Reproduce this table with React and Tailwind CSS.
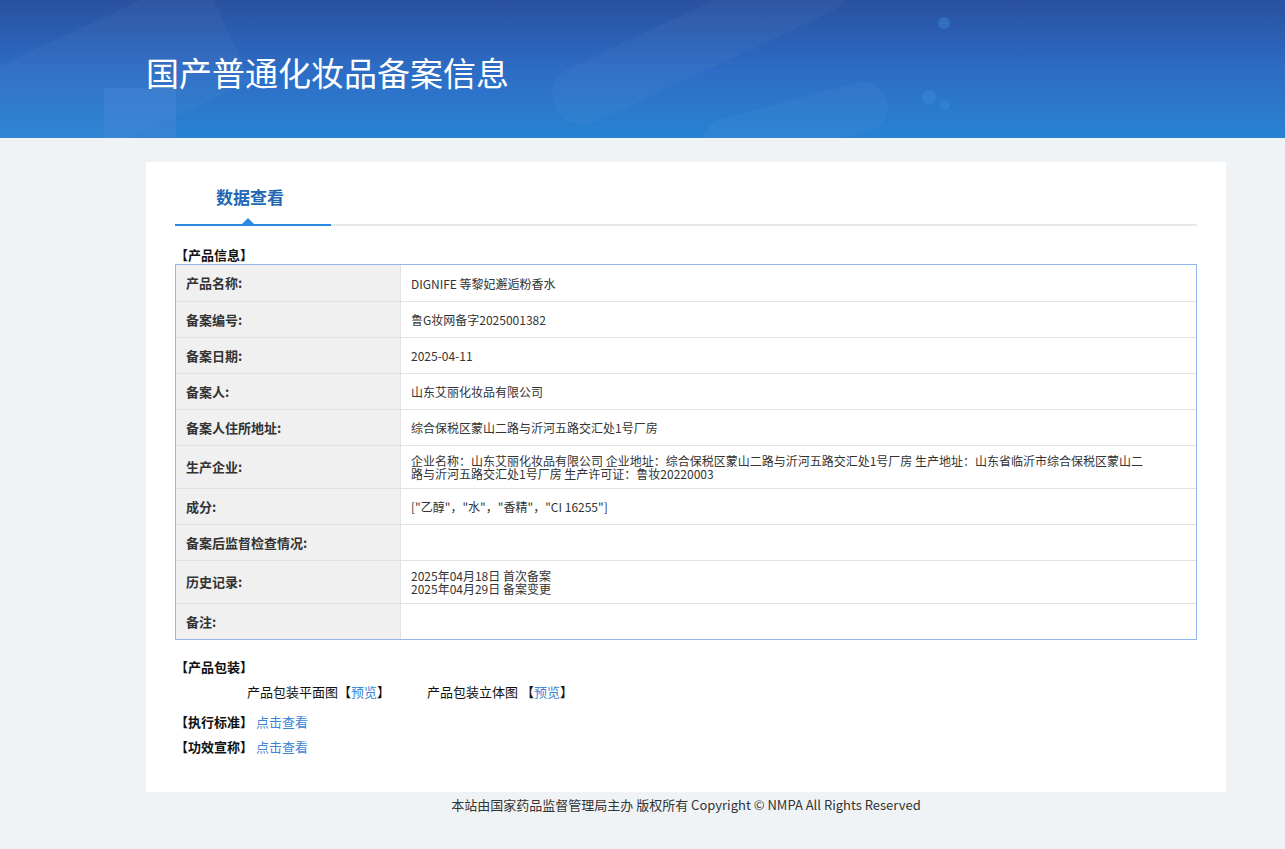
const rows = [
  { label: "产品名称:", value: ["DIGNIFE 等黎妃邂逅粉香水"] },
  { label: "备案编号:", value: ["鲁G妆网备字2025001382"] },
  { label: "备案日期:", value: ["2025-04-11"] },
  { label: "备案人:", value: ["山东艾丽化妆品有限公司"] },
  { label: "备案人住所地址:", value: ["综合保税区蒙山二路与沂河五路交汇处1号厂房"] },
  {
    label: "生产企业:",
    value: [
      "企业名称：山东艾丽化妆品有限公司 企业地址：综合保税区蒙山二路与沂河五路交汇处1号厂房 生产地址：山东省临沂市综合保税区蒙山二路与沂河五路交汇处1号厂房 生产许可证：鲁妆20220003",
    ],
    wrap: true,
  },
  { label: "成分:", value: ['["乙醇"，"水"，"香精"，"CI 16255"]'] },
  { label: "备案后监督检查情况:", value: [""] },
  { label: "历史记录:", value: ["2025年04月18日 首次备案", "2025年04月29日 备案变更"] },
  { label: "备注:", value: [""] },
];

const font = { fontFamily: '"Noto Sans CJK SC", "Microsoft YaHei", sans-serif' };

function Header() {
  return (
    <div className="relative h-[138px] overflow-hidden bg-gradient-to-b from-[#2951a0] via-[#2d6cc4] to-[#2882d3]">
      {/* faint background shapes */}
      <div className="absolute left-[-60px] top-[30px] h-[120px] w-[300px] -rotate-[25deg] bg-white/[0.03]" />
      <div className="absolute left-[104px] top-[88px] h-[60px] w-[72px] bg-[#4a86d8]/40" />
      <div className="absolute left-[540px] top-[10px] h-[60px] w-[320px] -rotate-[25deg] rounded-full bg-white/[0.03]" />
      <div className="absolute left-[700px] top-[100px] h-[50px] w-[190px] -rotate-[15deg] rounded-full bg-white/[0.03]" />
      <div className="absolute left-[938px] top-[17px] h-[12px] w-[12px] rounded-full bg-[#3a8ee0]/40" />
      <div className="absolute left-[922px] top-[90px] h-[14px] w-[14px] rounded-full bg-[#3a8ee0]/40" />
      <div className="absolute left-[940px] top-[100px] h-[10px] w-[10px] rounded-full bg-[#3a8ee0]/40" />
      <div className="relative ml-[146px] pt-[49px]">
        <h1 className="text-[33px] font-normal leading-[46px] text-white">国产普通化妆品备案信息</h1>
      </div>
    </div>
  );
}

function InfoTable() {
  return (
    <div className="border border-[#93b6ec]">
      {rows.map((r, i) => (
        <div
          key={r.label}
          className={`flex ${i > 0 ? "border-t border-[#e2e2e2]" : ""} ${r.value.length > 1 || r.wrap ? "min-h-[43px]" : "h-[36px]"}`}
        >
          <div className="flex w-[225px] shrink-0 items-center border-r border-[#e2e2e2] bg-[#f0f0f0] pl-[10px] text-[13px] font-bold text-[#333]">
            {r.label}
          </div>
          <div className="flex flex-1 flex-col justify-center pl-[10px] pr-[48px] text-[12px] leading-[13px] text-[#333]">
            {r.value.map((v, j) => (
              <div key={j}>{v}</div>
            ))}
          </div>
        </div>
      ))}
    </div>
  );
}

export default function App() {
  return (
    <div className="min-h-[849px] bg-[#f0f3f6]" style={font}>
      <Header />
      <div className="ml-[146px] w-[1080px] pt-[24px]">
        <div className="bg-white px-[29px] pb-[36px] pt-[22px]">
          <div className="flex border-b-2 border-[#e8e8e8]">
            <div className="relative -mb-[2px] w-[156px] border-b-2 border-[#2a8ae2] pb-[14px] text-center">
              <span className="relative left-[-3px] text-[17px] font-bold leading-[26px] text-[#2167b5]">数据查看</span>
              <div className="absolute bottom-0 left-[67px] h-0 w-0 border-x-[6px] border-b-[6px] border-x-transparent border-b-[#2a8ae2]" />
            </div>
          </div>

          <div className="mt-[20px] text-[13px] font-bold leading-[18px] text-[#111]">【产品信息】</div>
          <InfoTable />

          <div className="mt-[18px] text-[13px] font-bold leading-[18px] text-[#111]">【产品包装】</div>
          <div className="mt-[7px] flex pl-[72px] text-[13px] leading-[18px] text-[#111]">
            <div className="w-[180px]">
              产品包装平面图【<span className="text-[#3b86d4]">预览</span>】
            </div>
            <div>
              产品包装立体图 【<span className="text-[#3b86d4]">预览</span>】
            </div>
          </div>
          <div className="mt-[12px] flex gap-[3px] text-[13px] leading-[18px]">
            <span className="font-bold text-[#111]">【执行标准】</span>
            <span className="text-[#3b86d4]">点击查看</span>
          </div>
          <div className="mt-[7px] flex gap-[3px] text-[13px] leading-[18px]">
            <span className="font-bold text-[#111]">【功效宣称】</span>
            <span className="text-[#3b86d4]">点击查看</span>
          </div>
        </div>
        <div className="pt-[4px] text-center text-[13px] leading-[18px] text-[#333]">
          本站由国家药品监督管理局主办 版权所有 Copyright © NMPA All Rights Reserved
        </div>
      </div>
    </div>
  );
}
